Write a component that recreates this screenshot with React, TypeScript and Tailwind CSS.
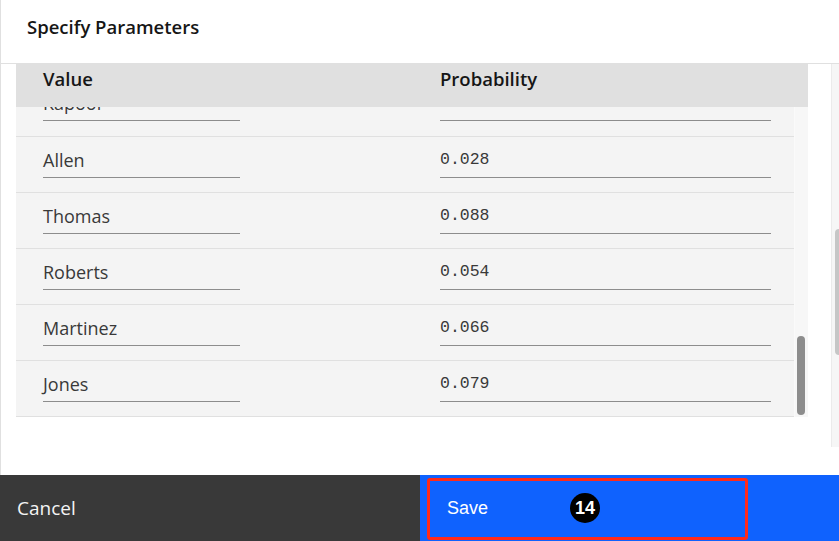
import React from "react";

type Row = { value: string; prob: string };

const rows: Row[] = [
  { value: "Allen", prob: "0.028" },
  { value: "Thomas", prob: "0.088" },
  { value: "Roberts", prob: "0.054" },
  { value: "Martinez", prob: "0.066" },
  { value: "Jones", prob: "0.079" },
];

function RowCells({ row }: { row: Row }) {
  return (
    <div className="flex h-[55px] items-start pt-[11px]">
      <div className="ml-[27px] w-[197px] border-b border-[#8d8d8d] pb-[5px] text-[18px] leading-[24px] text-[#393939]">
        {row.value}
      </div>
      <div className="ml-[200px] w-[331px] border-b border-[#8d8d8d] pb-[5px] font-['Liberation_Mono',monospace] text-[16.5px] leading-[24px] text-[#393939]">
        {row.prob}
      </div>
    </div>
  );
}

export default function App() {
  return (
    <div className="relative flex h-[541px] w-[839px] flex-col overflow-hidden bg-white font-['Open_Sans',sans-serif]">
      {/* Dialog body */}
      <div className="flex h-[475px] flex-col border-l border-[#e0e0e0]">
        <div className="h-[64px] border-b border-[#e0e0e0] pl-[26px] pt-[14px]">
          <h2 className="text-[18.5px] font-semibold leading-[26px] text-[#161616]">Specify Parameters</h2>
        </div>
        <div className="flex flex-1">
          <div className="flex-1 pl-[15px]">
            <div className="w-[792px]">
              {/* Table header */}
              <div className="flex h-[43px] bg-[#e0e0e0] pt-[2px] text-[18.5px] font-semibold leading-[26px] text-[#161616]">
                <div className="w-[424px] pl-[27px]">Value</div>
                <div>Probability</div>
              </div>
              {/* Table body */}
              <div className="flex h-[310px]">
                <div className="w-[778px] bg-[#f4f4f4]">
                  <div className="h-[29px] overflow-hidden">
                    <div className="-mt-[27px]">
                      <RowCells row={{ value: "Kapoor", prob: "0.071" }} />
                    </div>
                  </div>
                  {rows.map((r, i) => (
                    <div key={i} className="border-t border-[#e0e0e0]">
                      <RowCells row={r} />
                    </div>
                  ))}
                  <div className="border-t border-[#e0e0e0]" />
                </div>
                <div className="w-[14px] border-l border-[#fafafa] bg-[#f7f7f7] pl-[2px] pt-[229px]">
                  <div className="h-[79px] w-[8px] rounded-full bg-[#8d8d8d]" />
                </div>
              </div>
            </div>
          </div>
          {/* Outer scrollbar */}
          <div className="h-[383px] w-[8px] border-l border-[#ebebeb] bg-[#f6f6f6] pl-[3px] pt-[165px]">
            <div className="h-[126px] w-[4px] rounded-l-full bg-[#c6c6c6]" />
          </div>
        </div>
      </div>

      {/* Footer buttons */}
      <div className="flex h-[66px]">
        <button className="flex w-[420px] items-center bg-[#393939] pl-[17px] text-[19px] text-[#f4f4f4]">
          Cancel
        </button>
        <button className="flex flex-1 items-center bg-[#0f62fe] pl-[27px] font-['Liberation_Sans',sans-serif] text-[18px] text-white">
          Save
        </button>
      </div>

      {/* Annotation overlay */}
      <div className="absolute left-[427px] top-[478px] h-[62px] w-[321px] rounded-[3px] border-[3px] border-[#ff2a1a]" />
      <div className="absolute left-[570px] top-[493px] flex h-[30px] w-[30px] items-center justify-center rounded-full bg-black font-['Liberation_Sans',sans-serif] text-[18px] font-bold text-white">
        14
      </div>
    </div>
  );
}
